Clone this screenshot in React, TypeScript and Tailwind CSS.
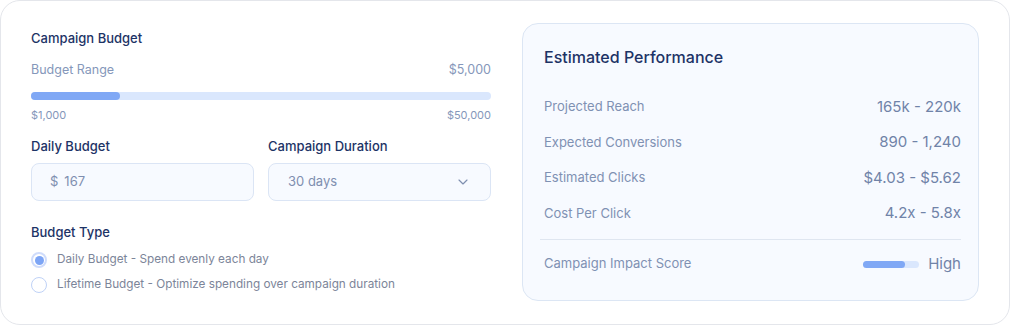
import { ChevronDown } from "lucide-react";

const stats = [
  { label: "Projected Reach", value: "165k - 220k" },
  { label: "Expected Conversions", value: "890 - 1,240" },
  { label: "Estimated Clicks", value: "$4.03 - $5.62" },
  { label: "Cost Per Click", value: "4.2x - 5.8x" },
];

function Radio({ checked, label }: { checked?: boolean; label: string }) {
  return (
    <label className="flex items-center gap-[10px] h-4">
      {checked ? (
        <span className="w-4 h-4 rounded-full border-[2.5px] border-[#cfdcfb] bg-white flex items-center justify-center">
          <span className="w-[9px] h-[9px] rounded-full bg-[#7da5f5]" />
        </span>
      ) : (
        <span className="w-4 h-4 rounded-full border border-[#bfd2f7] bg-white" />
      )}
      <span className="text-[11.75px] text-[#7c8599]">{label}</span>
    </label>
  );
}

export default function App() {
  return (
    <div
      className="w-[1010px] h-[325px] bg-white"
      style={{ fontFamily: "Inter, 'Noto Sans', sans-serif" }}
    >
      <div className="h-full border border-[#e4e6eb] rounded-[20px] px-[30px] py-[22px] flex gap-[31px]">
        {/* Left: budget settings */}
        <div className="w-[460px] flex flex-col pt-[5px]">
          <h3 className="text-[13px] font-medium text-[#1d3366] leading-5">Campaign Budget</h3>

          <div className="mt-3 flex justify-between text-[12.5px] leading-5 text-[#8597ba]">
            <span>Budget Range</span>
            <span>$5,000</span>
          </div>

          <div className="mt-3 h-2 rounded-full bg-[#dae7fd]">
            <div className="h-full w-[89px] rounded-full bg-[#80a8f5]" />
          </div>

          <div className="mt-[7px] flex justify-between text-[11px] leading-4 text-[#8597ba]">
            <span>$1,000</span>
            <span>$50,000</span>
          </div>

          <div className="mt-[13px] grid grid-cols-2 gap-[14px]">
            <div className="flex flex-col">
              <span className="text-[13px] font-medium text-[#1d3366] leading-5">Daily Budget</span>
              <div className="mt-[7px] h-[38px] rounded-lg border border-[#dbe5f5] bg-[#f7faff] flex items-center px-[18px] text-[13px] text-[#7f8fb0]">
                <span>$</span>
                <span className="ml-[6px]">167</span>
              </div>
            </div>
            <div className="flex flex-col">
              <span className="text-[13px] font-medium text-[#1d3366] leading-5">Campaign Duration</span>
              <div className="mt-[7px] h-[38px] rounded-lg border border-[#dbe5f5] bg-[#f7faff] flex items-center justify-between pl-[19px] pr-[19px] text-[13px] text-[#7f8fb0]">
                <span>30 days</span>
                <ChevronDown size={16} strokeWidth={1.75} className="text-[#7f8fb0]" />
              </div>
            </div>
          </div>

          <h3 className="mt-[21px] text-[13px] font-medium text-[#1d3366] leading-5">Budget Type</h3>
          <div className="mt-[10px] flex flex-col gap-[9px]">
            <Radio checked label="Daily Budget - Spend evenly each day" />
            <Radio label="Lifetime Budget - Optimize spending over campaign duration" />
          </div>
        </div>

        {/* Right: estimated performance */}
        <div className="w-[457px] h-[278px] rounded-2xl border border-[#dce6f4] bg-[#f7faff] px-[17px] pt-[21px]">
          <h3 className="pl-1 text-base font-medium text-[#1d3366] leading-6">Estimated Performance</h3>
          <div className="mt-5 flex flex-col">
            {stats.map((s) => (
              <div key={s.label} className="h-[35.5px] flex items-center justify-between pl-1">
                <span className="text-[13px] text-[#7f91b3]">{s.label}</span>
                <span className="text-[15px] text-[#7083a8]">{s.value}</span>
              </div>
            ))}
          </div>
          <div className="mt-2 border-t border-[#dfe6f0]" />
          <div className="h-12 flex items-center justify-between pl-1">
            <span className="text-[13px] text-[#7f91b3]">Campaign Impact Score</span>
            <div className="flex items-center gap-[9px]">
              <div className="w-14 h-[7px] rounded-full bg-[#dae7fd]">
                <div className="h-full w-3/4 rounded-full bg-[#80a8f5]" />
              </div>
              <span className="text-[15px] text-[#7083a8]">High</span>
            </div>
          </div>
        </div>
      </div>
    </div>
  );
}
